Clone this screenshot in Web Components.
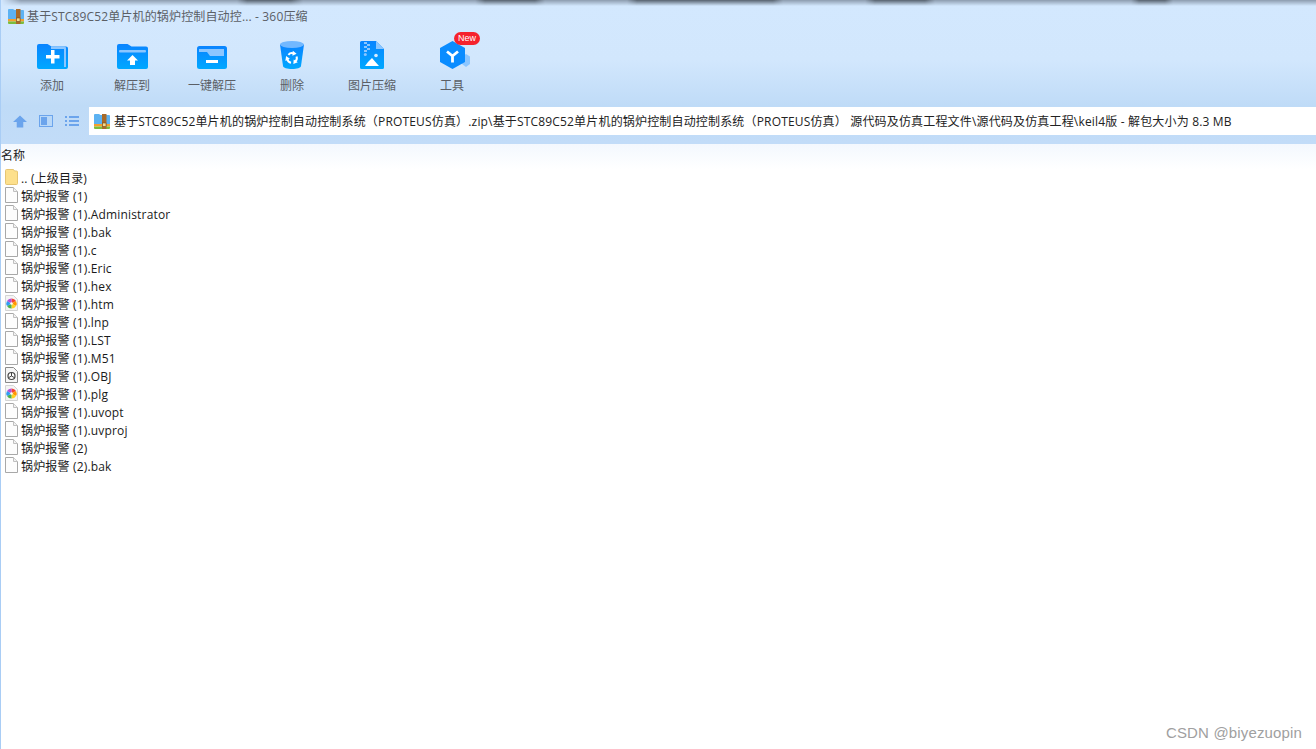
<!DOCTYPE html>
<html lang="zh">
<head>
<meta charset="utf-8">
<title>360压缩</title>
<style>
html, body { margin: 0; height: 100%; background: #fff; overflow: hidden; }
body { font-family: "Open Sans", "Noto Sans CJK SC", sans-serif; }
</style>
</head>
<body>
<zip-window></zip-window>

<script>
const BLUE = `<defs><linearGradient id="g" x1="0" y1="0" x2="0" y2="1"><stop offset="0" stop-color="#0a84ff"/><stop offset="1" stop-color="#00a8ff"/></linearGradient></defs>`;
const RECYCLE_ARM = `<path d="M-3.600 -3.200A4.800 4.800 0 0 1 1.500 -4.600" fill="none" stroke="#fff" stroke-width="2"/><path d="M.8 -7.200L4.600 -4.200L.4 -2.200z" fill="#fff"/>`;

const ICONS = {
    add: `<svg width="31" height="25" viewBox="0 0 31 25">${BLUE}<path d="M0 2a2 2 0 0 1 2-2h8.500l4 2.500H29a2 2 0 0 1 2 2V23a2 2 0 0 1-2 2H2a2 2 0 0 1-2-2z" fill="url(#g)"/><path d="M14 2.500h13.500a1.500 1.500 0 0 1 1.500 1.500v19h-2V5H14z" fill="#8cc6ff"/><path d="M9 11h5V6h3.500v5h5v3.500h-5v5H14v-5H9z" fill="#fff"/></svg>`,
    extract: `<svg width="31" height="25" viewBox="0 0 31 25">${BLUE}<path d="M0 2a2 2 0 0 1 2-2h8.500l4 2.500H29a2 2 0 0 1 2 2V23a2 2 0 0 1-2 2H2a2 2 0 0 1-2-2z" fill="url(#g)"/><rect x="2" y="6" width="27" height="2.500" rx="1" fill="#8cc6ff"/><path d="M15.500 11l5.500 5.500h-3V21h-5v-4.500h-3z" fill="#fff"/></svg>`,
    oneclick: `<svg width="30" height="23" viewBox="0 0 30 23">${BLUE}<rect width="30" height="23" rx="2.500" fill="url(#g)"/><path d="M2 3h25v7H13l-3-4H2z" fill="#8cc6ff"/><rect x="9" y="14" width="12" height="3" fill="#fff"/></svg>`,
    trash: `<svg width="24" height="28" viewBox="0 0 24 28">${BLUE}<path d="M0 3.500L3 25c.3 2 4 3 9 3s8.700-1 9-3l3-21.500z" fill="url(#g)"/><ellipse cx="12" cy="3.500" rx="12" ry="3.500" fill="#72b8ff"/><g transform="translate(12 17)">${RECYCLE_ARM}<g transform="rotate(120)">${RECYCLE_ARM}</g><g transform="rotate(240)">${RECYCLE_ARM}</g></g></svg>`,
    image: `<svg width="24" height="28" viewBox="0 0 24 28">${BLUE}<path d="M1.500 0H16l8 8v18.500a1.500 1.500 0 0 1-1.500 1.500h-21A1.500 1.500 0 0 1 0 26.500v-25A1.500 1.500 0 0 1 1.500 0z" fill="url(#g)"/><path d="M16 0l8 8h-8z" fill="#8cc6ff"/><path d="M4 1h3v2H4zM7 3h3v2H7zM4 5h3v2H4zM7 7h3v2H7zM4 9h3v2H4z" fill="#8cc6ff"/><circle cx="5.300" cy="13.500" r="1.500" fill="#8cc6ff"/><circle cx="16" cy="14.500" r="1.800" fill="#d7ecff"/><path d="M5 25l3-4 4-4 3 3.500 4 4.500z" fill="#fff"/></svg>`,
    tools: `<svg width="25" height="28" viewBox="0 0 25 28" style="overflow:visible"><path d="M26 13l4 2.500v7.500L26 26l-4-3v-7.500z" fill="#8cc6ff"/><path d="M12.500 0L25 7v14l-12.500 7L0 21V7z" fill="#0a8cff"/><path d="M12.500 15v6.500M12.500 15L7 10.500M12.500 15l5.500-4.500" stroke="#fff" stroke-width="2.800" fill="none"/></svg>`,
    up: `<svg width="14" height="13" viewBox="0 0 15 13"><path d="M7.500 0L15 7h-4v6H4V7H0z" fill="#6ba4ec"/></svg>`,
    preview: `<svg width="14" height="12" viewBox="0 0 14 12"><rect x=".5" y=".5" width="13" height="11" fill="#b9d8f8" stroke="#6ba4ec"/><rect x="2" y="2" width="6" height="8" fill="#6ba4ec"/></svg>`,
    list: `<svg width="14" height="10" viewBox="0 0 14 10"><path d="M0 0h2v2H0zM4 0h10v2H4zM0 4h2v2H0zM4 4h10v2H4zM0 8h2v2H0zM4 8h10v2H4z" fill="#6ba4ec"/></svg>`,
    zip: `<svg width="16" height="15" viewBox="0 0 16 15"><path d="M0 1a1 1 0 0 1 1-1h4l1.500 1H15a1 1 0 0 1 1 1v9H0z" fill="#5cb2f2"/><rect x="0" y="10" width="16" height="2.500" fill="#f2a02e"/><path d="M0 12.500h16V14a1 1 0 0 1-1 1H1a1 1 0 0 1-1-1z" fill="#7cbc3c"/><rect x="8" y="0" width="4.500" height="15" fill="#a86a28"/><rect x="8.500" y="9" width="3.500" height="3.500" fill="#f4dc90" stroke="#7a4a18" stroke-width=".6"/></svg>`,
    folder: `<svg width="13" height="16" viewBox="0 0 13 16"><path d="M.5 1.500a1 1 0 0 1 1-1h7l1 1.500h2a1 1 0 0 1 1 1v11.500a1 1 0 0 1-1 1h-10a1 1 0 0 1-1-1z" fill="#fde08c" stroke="#e6c572"/></svg>`,
    file: `<svg width="13" height="16" viewBox="0 0 13 16"><path d="M.5.500h8l4 4v11H.5z" fill="#fdfdfd" stroke="#a8a8a8"/><path d="M8.500.500v4h4" fill="#f2f2f2" stroke="#c0c0c0"/></svg>`,
    web: `<svg width="13" height="16" viewBox="0 0 13 16"><path d="M.5.500h8l4 4v11H.5z" fill="#f4f4f4" stroke="#d4d4d4"/><path d="M6.500 8.500V3.500A5 5 0 0 1 11 6z" fill="#f44336"/><path d="M6.500 8.500L11 6a5 5 0 0 1 0 5z" fill="#ff9800"/><path d="M6.500 8.500L11 11a5 5 0 0 1-4.500 2.500z" fill="#ffd21f"/><path d="M6.500 8.500v5A5 5 0 0 1 2 11z" fill="#4caf50"/><path d="M6.500 8.500L2 11a5 5 0 0 1 0-5z" fill="#2f9df4"/><path d="M6.500 8.500L2 6a5 5 0 0 1 4.500-2.500z" fill="#b44fd8"/><circle cx="6.500" cy="8.500" r="1.300" fill="#fff"/></svg>`,
    obj: `<svg width="13" height="16" viewBox="0 0 13 16"><path d="M.5.500h8l4 4v11H.5z" fill="#f6f6f6" stroke="#8a8a8a"/><circle cx="6.500" cy="9" r="3.500" fill="#fff" stroke="#444" stroke-width="1.200"/><path d="M6.500 6v3M6.500 9l2.600 1.500M6.500 9l-2.600 1.500" stroke="#444"/></svg>`
};

class ToolButton extends HTMLElement {
    connectedCallback() {
        const icon = this.getAttribute('icon');
        const badge = this.getAttribute('badge');
        this.attachShadow({ mode: 'open' }).innerHTML = `
            <style>
                :host { display: flex; flex-direction: column; align-items: center; width: 80px; position: relative; color: #5b5f66; font-size: 12px; }
                .pic { height: 32px; display: flex; align-items: flex-end; justify-content: center; }
                .txt { margin-top: 8px; line-height: 17px; white-space: nowrap; }
                .badge { position: absolute; left: 42px; top: -5px; width: 26px; height: 13px; border-radius: 7px; background: #f5222d; color: #fff; font: 9px/13px "Liberation Sans", sans-serif; text-align: center; }
            </style>
            <div class="pic">${ICONS[icon]}</div>
            <div class="txt"><slot></slot></div>
            ${badge ? `<span class="badge">${badge}</span>` : ''}
        `;
    }
}

class FileRow extends HTMLElement {
    connectedCallback() {
        const icon = this.getAttribute('icon') || 'file';
        this.attachShadow({ mode: 'open' }).innerHTML = `
            <style>
                :host { display: flex; align-items: center; height: 18px; padding-left: 4px; gap: 3px; font: 12px "Open Sans", "Noto Sans CJK SC", sans-serif; letter-spacing: .17px; color: #1a1a1a; white-space: nowrap; }
                .pic { width: 13px; height: 16px; display: flex; margin-bottom: 2px; }
            </style>
            <span class="pic">${ICONS[icon]}</span><span><slot></slot></span>
        `;
    }
}

class ZipWindow extends HTMLElement {
    connectedCallback() {
        const files = [
            ['file', '锅炉报警 (1)'], ['file', '锅炉报警 (1).Administrator'], ['file', '锅炉报警 (1).bak'],
            ['file', '锅炉报警 (1).c'], ['file', '锅炉报警 (1).Eric'], ['file', '锅炉报警 (1).hex'],
            ['web', '锅炉报警 (1).htm'], ['file', '锅炉报警 (1).lnp'], ['file', '锅炉报警 (1).LST'],
            ['file', '锅炉报警 (1).M51'], ['obj', '锅炉报警 (1).OBJ'], ['web', '锅炉报警 (1).plg'],
            ['file', '锅炉报警 (1).uvopt'], ['file', '锅炉报警 (1).uvproj'], ['file', '锅炉报警 (2)'],
            ['file', '锅炉报警 (2).bak']
        ];
        this.attachShadow({ mode: 'open' }).innerHTML = `
            <style>
                :host { display: flex; flex-direction: column; height: 749px; border-left: 1px solid #a9cdf5; box-sizing: border-box; position: relative; font-family: "Open Sans", "Noto Sans CJK SC", sans-serif; }
                .chrome { height: 144px; flex: none; background: linear-gradient(#d3e8fe 0, #d2e7fd 60px, #bfdbf7 106px, #c2dcf8 144px); position: relative; display: flex; flex-direction: column; }
                .shadow { position: absolute; left: 0; right: 0; top: 0; height: 6px;
                    -webkit-mask-image: linear-gradient(#000, transparent); mask-image: linear-gradient(#000, transparent);
                    background: linear-gradient(90deg, #d3e8fe 0, #8c9cae 20px, #8c9cae 236px, #56626e 246px, #56626e 290px, #8c9cae 302px, #8c9cae 474px, #56626e 484px, #56626e 534px, #8c9cae 544px, #8c9cae 626px, #56626e 636px, #56626e 772px, #8c9cae 782px, #8c9cae 864px, #56626e 874px, #56626e 924px, #8c9cae 934px, #8c9cae 1130px, #56626e 1138px, #56626e 1164px, #8c9cae 1172px, #8c9cae 100%); }
                .title { height: 32px; display: flex; align-items: center; padding: 0 0 0 7px; gap: 3px; font-size: 12px; letter-spacing: .15px; color: #5b5f66; flex: none; }
                .tools { display: flex; padding: 5px 0 0 11px; height: 66px; box-sizing: border-box; flex: none; }
                .nav { display: flex; align-items: stretch; height: 28px; margin-top: 9px; flex: none; }
                .navbtns { width: 88px; flex: none; display: flex; align-items: center; box-sizing: border-box; padding-left: 12px; gap: 12px; }
                .path { flex: 1; background: #fff; display: flex; align-items: center; padding-left: 5px; gap: 4px; font-size: 12px; letter-spacing: .17px; color: #222; white-space: pre; }
                .head { height: 25px; flex: none; background: linear-gradient(#f3f8fe, #fff); font-size: 12px; color: #222; line-height: 23px; }
                .list { flex: 1; }
                .mark { position: absolute; right: 14px; bottom: 8px; font: 15px "Liberation Sans", sans-serif; color: #a0a0a0; letter-spacing: .15px; }
            </style>
            <div class="chrome">
                <div class="shadow"></div>
                <div class="title">${ICONS.zip}<span>基于STC89C52单片机的锅炉控制自动控... - 360压缩</span></div>
                <div class="tools">
                    <tool-button icon="add">添加</tool-button>
                    <tool-button icon="extract">解压到</tool-button>
                    <tool-button icon="oneclick">一键解压</tool-button>
                    <tool-button icon="trash">删除</tool-button>
                    <tool-button icon="image">图片压缩</tool-button>
                    <tool-button icon="tools" badge="New">工具</tool-button>
                </div>
                <div class="nav">
                    <div class="navbtns">${ICONS.up}${ICONS.preview}${ICONS.list}</div>
                    <div class="path">${ICONS.zip}<span>基于STC89C52单片机的锅炉控制自动控制系统（PROTEUS仿真）.zip\\基于STC89C52单片机的锅炉控制自动控制系统（PROTEUS仿真） 源代码及仿真工程文件\\源代码及仿真工程\\keil4版 - 解包大小为 8.3 MB</span></div>
                </div>
            </div>
            <div class="head">名称</div>
            <div class="list">
                <file-row icon="folder">.. (上级目录)</file-row>
                ${files.map(f => `<file-row icon="${f[0]}">${f[1]}</file-row>`).join('')}
            </div>
            <div class="mark">CSDN @biyezuopin</div>
        `;
    }
}

customElements.define('tool-button', ToolButton);
customElements.define('file-row', FileRow);
customElements.define('zip-window', ZipWindow);
</script>
</body>
</html>
